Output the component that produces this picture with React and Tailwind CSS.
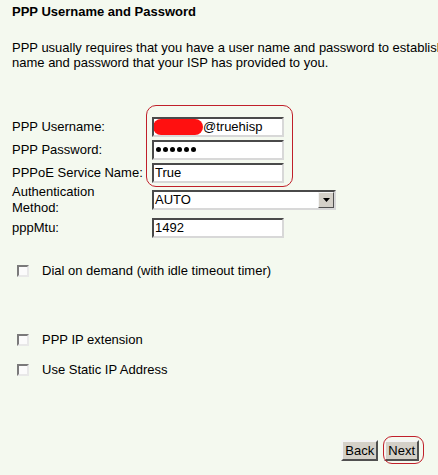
import React from 'react';

const Field = ({ children, w = 'w-[132px]' }) => (
  <div className={`${w} h-[20px] bg-white border-2 border-t-[#4a4a4a] border-l-[#4a4a4a] border-b-[#d8d8d8] border-r-[#d8d8d8] flex items-center pl-[1px] overflow-hidden whitespace-nowrap`}>
    {children}
  </div>
);

const Row = ({ label, h = 'h-[23px]', children }) => (
  <div className={`flex items-center ${h}`}>
    <div className="w-[140px] leading-[16px]">{label}</div>
    {children}
  </div>
);

const Check = ({ label }) => (
  <div className="flex items-center h-[16px] pl-[17px]">
    <span className="w-[12px] h-[12px] bg-[#fbfbfb] border-2 border-t-[#7a7a7a] border-l-[#7a7a7a] border-b-[#e8e8e8] border-r-[#e8e8e8]" />
    <span className="ml-[13px]">{label}</span>
  </div>
);

const Btn = ({ children }) => (
  <button className="h-[21px] px-[2px] bg-[#d4d0c8] border-2 border-t-[#f4f4f4] border-l-[#f4f4f4] border-b-[#505050] border-r-[#505050] leading-none text-black">
    {children}
  </button>
);

export default function App() {
  return (
    <div
      className="relative w-[438px] h-[475px] overflow-hidden bg-[#f4f9ef] text-[13px] text-black whitespace-nowrap"
      style={{ fontFamily: '"Liberation Sans", Arial, sans-serif' }}
    >
      <div className="pl-[12px] pt-[4px] font-bold leading-[16px]">PPP Username and Password</div>

      <div className="pl-[12px] mt-[20px] leading-[15px]">
        <div>PPP usually requires that you have a user name and password to establish a connection with your ISP.</div>
        <div>name and password that your ISP has provided to you.</div>
      </div>

      <div className="pl-[12px] mt-[45px]">
        <Row label="PPP Username:">
          <Field>
            <span className="w-[50px] h-[16px] rounded-full bg-[#ff1010] blur-[0.5px] -ml-[2px]" />
            <span>@truehisp</span>
          </Field>
        </Row>
        <Row label="PPP Password:">
          <Field>
            <div className="flex gap-[2px] pl-[1px]">
              {[0, 1, 2, 3, 4, 5].map(i => (
                <span key={i} className="w-[5px] h-[5px] rounded-full bg-black" />
              ))}
            </div>
          </Field>
        </Row>
        <Row label="PPPoE Service Name:">
          <Field>True</Field>
        </Row>
        <Row label={<>Authentication<br />Method:</>} h="h-[32px]">
          <div className="w-[184px] h-[20px] bg-white border-2 border-t-[#4a4a4a] border-l-[#4a4a4a] border-b-[#d8d8d8] border-r-[#d8d8d8] flex items-center justify-between pl-[1px]">
            <span>AUTO</span>
            <span className="w-[16px] h-[16px] bg-[#d4d0c8] border border-t-[#f4f4f4] border-l-[#f4f4f4] border-b-[#505050] border-r-[#505050] flex items-center justify-center">
              <svg width="7" height="4" viewBox="0 0 7 4"><path d="M0 0h7L3.5 4z" fill="#000" /></svg>
            </span>
          </div>
        </Row>
        <Row label="pppMtu:">
          <Field>1492</Field>
        </Row>
      </div>

      <div className="mt-[24px]">
        <Check label="Dial on demand (with idle timeout timer)" />
      </div>
      <div className="mt-[53px]">
        <Check label="PPP IP extension" />
      </div>
      <div className="mt-[14px]">
        <Check label="Use Static IP Address" />
      </div>

      <div className="flex justify-end gap-[6px] pr-[19px] mt-[62px]">
        <Btn>Back</Btn>
        <Btn>Next</Btn>
      </div>

      {/* red annotation marks */}
      <div className="absolute left-[146px] top-[105px] w-[147px] h-[82px] rounded-[10px] border border-[#c0202a]" />
      <div className="absolute left-[383px] top-[436px] w-[41px] h-[28px] rounded-[9px] border border-[#c0202a]" />
    </div>
  );
}
